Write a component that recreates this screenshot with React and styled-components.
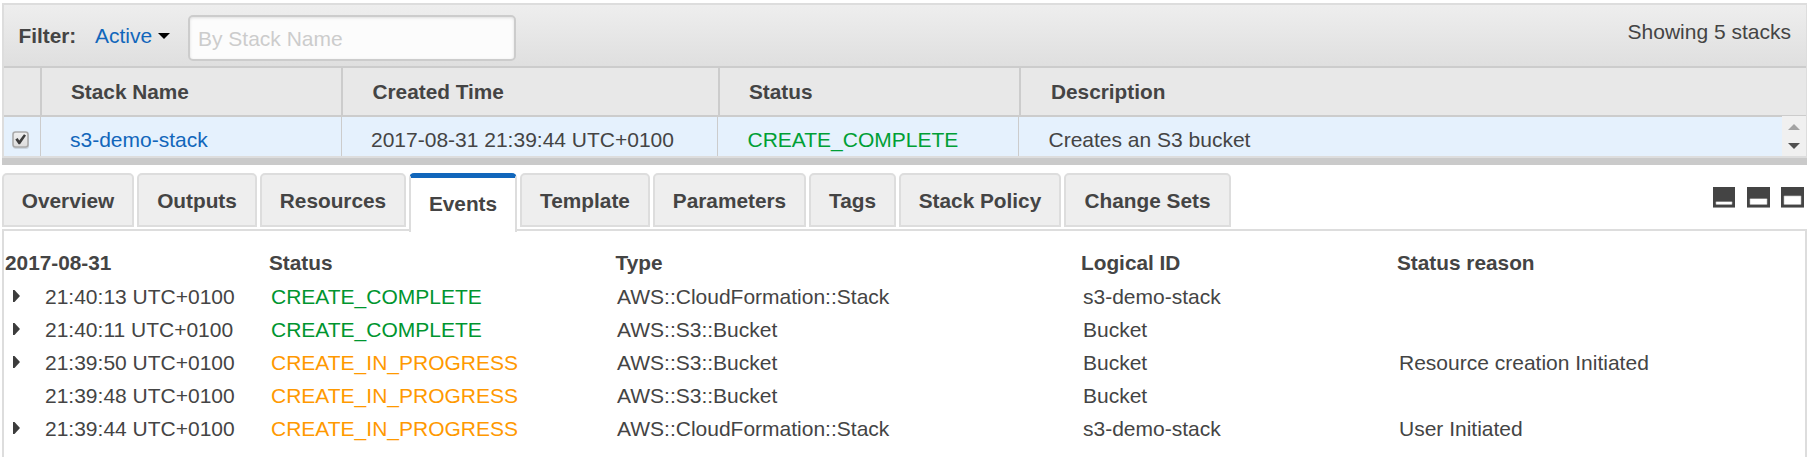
import React from "react";
import styled, { createGlobalStyle } from "styled-components";

const GlobalStyle = createGlobalStyle`
  *, *::before, *::after { box-sizing: border-box; }
  body {
    margin: 0;
    background: #fff;
    color: #444;
    font: 21px/24px "Liberation Sans", Arial, sans-serif;
    overflow: hidden;
  }
`;

const Page = styled.main`
  width: 1810px;
  height: 457px;
  padding: 3px 3px 0 2px;
  display: flex;
  flex-direction: column;
  overflow: hidden;
`;

const StackPanel = styled.section`
  border: 2px solid #ddd;
  border-right-width: 1px;
  height: 155px;
  flex: none;
`;

const FilterBar = styled.header`
  height: 63px;
  display: flex;
  align-items: flex-start;
  background: linear-gradient(#eee, #dfdfdf);
  border-bottom: 2px solid #ccc;
  padding: 10px 15px 0 14.5px;
`;

const FilterLabel = styled.span`
  font-size: 20.8px;
  font-weight: bold;
  margin-top: 9px;
  width: 76.5px;
`;

const FilterMenu = styled.button`
  display: flex;
  align-items: center;
  gap: 6px;
  width: 93px;
  margin-top: 9px;
  padding: 0;
  border: 0;
  background: none;
  color: #1166bb;
  font: inherit;
`;

const Caret = styled.svg`
  display: block;
  flex: none;
`;

const SearchInput = styled.input`
  width: 328px;
  height: 46px;
  padding: 1px 8px 0;
  border: 2px solid #ccc;
  border-radius: 5px;
  background: #fcfcfc;
  box-shadow: inset 0 1px 3px rgba(0, 0, 0, 0.12);
  font: inherit;
  &::placeholder { color: #ccc; opacity: 1; }
`;

const Count = styled.span`
  margin: 5px 0 0 auto;
`;

const HeadRow = styled.div`
  display: grid;
  grid-template-columns: 36px 301px 377px 301px 1fr;
  height: 48px;
  background: #e8e8e8;
  font-size: 20.8px;
`;

const HeadCell = styled.div`
  display: flex;
  border-bottom: 2px solid #ccc;
  border-left: ${(p) => (p.$first ? 0 : "2px solid #ccc")};
  padding-left: ${(p) => p.$indent || 0}px;
`;

const HeadLabel = styled.span`
  height: 47px;
  padding: 12px 8px 0;
  font-weight: bold;
  background: #e8e8e8;
`;

const BodyRow = styled.div`
  display: grid;
  grid-template-columns: 36px 301px 376px 301px 1fr 24.5px;
  height: 40px;
  background: #e5f1fd;
`;

const BodyCell = styled.div`
  border-left: ${(p) => (p.$first ? 0 : "1px solid #ccc")};
  padding: 12px 0 0 ${(p) => p.$indent}px;
  color: ${(p) => p.$color || "#444"};
  overflow: hidden;
`;

const CheckCell = styled(BodyCell)`
  padding-top: 15px;
  line-height: 0;
`;

const Scroller = styled.div`
  display: flex;
  flex-direction: column;
  align-items: center;
  gap: 13px;
  padding-top: 8px;
  background: #f0f0f0;
`;

const Splitter = styled.div`
  height: 7px;
  flex: none;
  background: #cacaca;
`;

const TabBar = styled.nav`
  display: flex;
  flex: none;
  height: 56px;
  margin-top: 8px;
`;

const Tab = styled.button`
  flex: none;
  width: ${(p) => p.$width}px;
  height: 54px;
  margin: 0 3px 0 0;
  padding: 2px 0 0;
  border: 2px solid #ddd;
  border-radius: 5px 5px 0 0;
  background: #eee;
  color: #444;
  font: inherit;
  font-size: 20.8px;
  font-weight: bold;
`;

const ActiveTab = styled(Tab)`
  position: relative;
  height: 59px;
  padding: 0 0 2px;
  border-top: 5px solid #1166bb;
  border-bottom: 0;
  background: #fff;
`;

const ViewSwitch = styled.div`
  display: flex;
  gap: 11.5px;
  margin: 14px 3px 0 auto;
`;

const EventsPanel = styled.section`
  flex: 1;
  border: 2px solid #ddd;
  border-bottom: 0;
  padding: 15px 0 0 1px;
`;

const EventRow = styled.div`
  display: grid;
  grid-template-columns: 40px 226px 346px 466px 316px 1fr;
  height: 33px;
  line-height: 33px;
`;

const EventHead = styled(EventRow)`
  grid-template-columns: 264px 346.5px 465.5px 316px 1fr;
  height: 34px;
  font-size: 20.8px;
  font-weight: bold;
`;

const ArrowCell = styled.span`
  padding: 10px 0 0 8px;
  line-height: 0;
`;

const Status = styled.span`
  color: ${(p) => (p.$done ? "#00952f" : "#ff9900")};
`;

const tabs = [
  ["Overview", 132],
  ["Outputs", 120],
  ["Resources", 146],
  ["Events", 108],
  ["Template", 130],
  ["Parameters", 153],
  ["Tags", 87],
  ["Stack Policy", 162],
  ["Change Sets", 167],
];

const events = [
  ["21:40:13", "CREATE_COMPLETE", "AWS::CloudFormation::Stack", "s3-demo-stack", "", true],
  ["21:40:11", "CREATE_COMPLETE", "AWS::S3::Bucket", "Bucket", "", true],
  ["21:39:50", "CREATE_IN_PROGRESS", "AWS::S3::Bucket", "Bucket", "Resource creation Initiated", true],
  ["21:39:48", "CREATE_IN_PROGRESS", "AWS::S3::Bucket", "Bucket", "", false],
  ["21:39:44", "CREATE_IN_PROGRESS", "AWS::CloudFormation::Stack", "s3-demo-stack", "User Initiated", true],
];

function Checkbox() {
  return (
    <svg width="18" height="19" viewBox="0 0 18 19" role="img" aria-label="Selected">
      <defs>
        <linearGradient id="box" x1="0" y1="0" x2="0" y2="1">
          <stop offset="0" stopColor="#f0f0f0" />
          <stop offset="1" stopColor="#dcdcdc" />
        </linearGradient>
      </defs>
      <rect x="1" y="2" width="16" height="16" rx="3" fill="#cbd5df" />
      <rect x="1" y="1" width="15" height="15" rx="2.5" fill="url(#box)" stroke="#aaa" strokeWidth="1.6" />
      <path d="M3.3 8.6 5.6 6.9 7.3 9.5 12 3.3 14 4.5 8 13.2 6.6 13.2Z" fill="#3d3d3d" />
    </svg>
  );
}

function PaneIcon({ width, top }) {
  return (
    <svg width={width} height="21" viewBox={`0 0 ${width} 21`}>
      <rect width={width} height="20" fill="#444" />
      <rect y="20" width={width} height="1" fill="#999" />
      <rect x="2.6" y={top} width={width - 5.2} height={18 - top} rx="1" fill="#999" />
      <rect x="3.2" y={top + 0.8} width={width - 6.4} height={16.4 - top} fill="#fff" />
    </svg>
  );
}

export default function App() {
  return (
    <Page>
      <GlobalStyle />
      <StackPanel>
        <FilterBar>
          <FilterLabel>Filter:</FilterLabel>
          <FilterMenu>
            Active
            <Caret width="12" height="6" viewBox="0 0 12 6"><path d="M0 0H12L6 6Z" fill="#000" /></Caret>
          </FilterMenu>
          <SearchInput placeholder="By Stack Name" />
          <Count>Showing 5 stacks</Count>
        </FilterBar>
        <HeadRow>
          <HeadCell $first />
          <HeadCell $indent={21}><HeadLabel>Stack Name</HeadLabel></HeadCell>
          <HeadCell $indent={21.5}><HeadLabel>Created Time</HeadLabel></HeadCell>
          <HeadCell $indent={21}><HeadLabel>Status</HeadLabel></HeadCell>
          <HeadCell $indent={22}><HeadLabel>Description</HeadLabel></HeadCell>
        </HeadRow>
        <BodyRow>
          <CheckCell $first $indent={7.5}><Checkbox /></CheckCell>
          <BodyCell $indent={29} $color="#1166bb">s3-demo-stack</BodyCell>
          <BodyCell $indent={29}>2017-08-31 21:39:44 UTC+0100</BodyCell>
          <BodyCell $indent={29.5} $color="#009f35">CREATE_COMPLETE</BodyCell>
          <BodyCell $indent={29.5}>Creates an S3 bucket</BodyCell>
          <Scroller>
            <svg width="12" height="6" viewBox="0 0 12 6"><path d="M0 6H12L6 0Z" fill="#a3a3a3" /></svg>
            <svg width="12" height="6" viewBox="0 0 12 6"><path d="M0 0H12L6 6Z" fill="#505050" /></svg>
          </Scroller>
        </BodyRow>
      </StackPanel>
      <Splitter />
      <TabBar>
        {tabs.map(([name, width]) => {
          const Part = name === "Events" ? ActiveTab : Tab;
          return <Part key={name} $width={width}>{name}</Part>;
        })}
        <ViewSwitch>
          <PaneIcon width={22} top={14.2} />
          <PaneIcon width={23} top={11.2} />
          <PaneIcon width={23} top={8.4} />
        </ViewSwitch>
      </TabBar>
      <EventsPanel>
        <EventHead>
          <span>2017-08-31</span>
          <span>Status</span>
          <span>Type</span>
          <span>Logical ID</span>
          <span>Status reason</span>
        </EventHead>
        {events.map(([time, status, type, id, reason, expandable]) => (
          <EventRow key={time}>
            <ArrowCell>
              {expandable && <svg width="7" height="12" viewBox="0 0 7 12"><path d="M0 0H1.5L7 6 1.5 12H0Z" fill="#3c3c3c" /></svg>}
            </ArrowCell>
            <span>{time} UTC+0100</span>
            <Status $done={status === "CREATE_COMPLETE"}>{status}</Status>
            <span>{type}</span>
            <span>{id}</span>
            <span>{reason}</span>
          </EventRow>
        ))}
      </EventsPanel>
    </Page>
  );
}
